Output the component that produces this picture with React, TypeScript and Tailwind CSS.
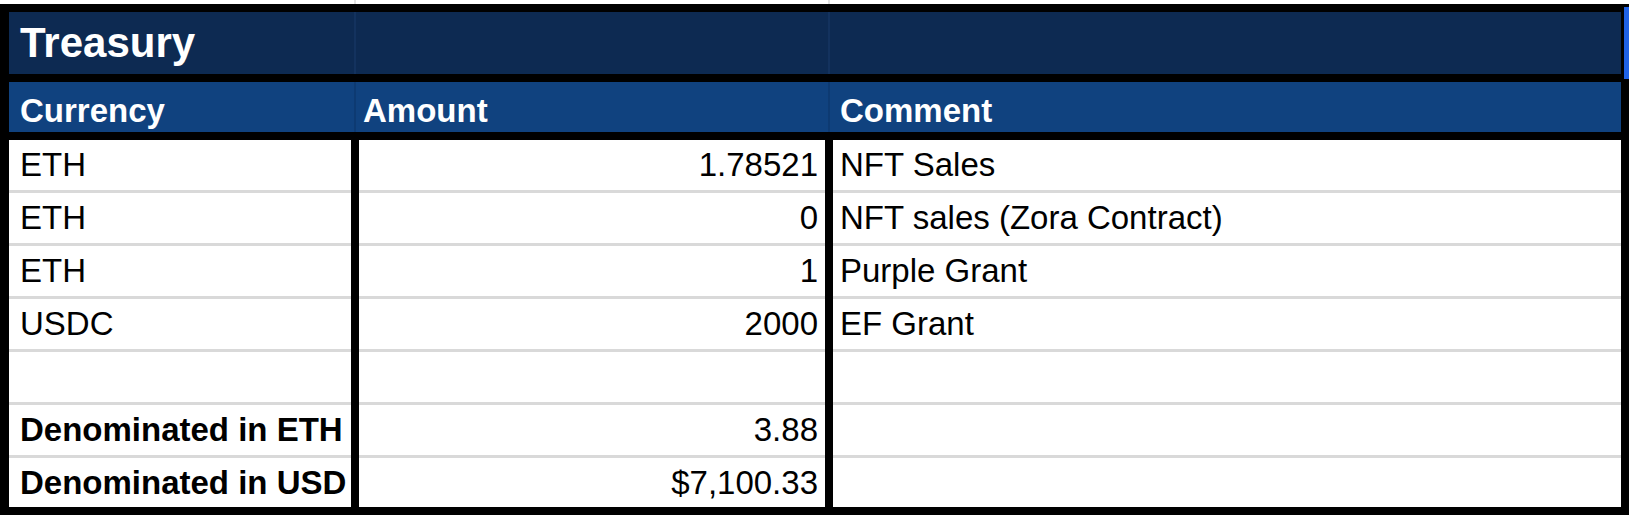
import React from 'react'

type Row = { currency: string; amount: string; comment: string; bold?: boolean }

const rows: Row[] = [
  { currency: 'ETH', amount: '1.78521', comment: 'NFT Sales' },
  { currency: 'ETH', amount: '0', comment: 'NFT sales (Zora Contract)' },
  { currency: 'ETH', amount: '1', comment: 'Purple Grant' },
  { currency: 'USDC', amount: '2000', comment: 'EF Grant' },
  { currency: '', amount: '', comment: '' },
  { currency: 'Denominated in ETH', amount: '3.88', comment: '', bold: true },
  { currency: 'Denominated in USD', amount: '$7,100.33', comment: '', bold: true },
]

function GridLine({ color }: { color: string }) {
  return (
    <div className="flex justify-center">
      <div className={`w-[2px] h-full ${color}`} />
    </div>
  )
}

export default function App() {
  return (
    <div className="relative w-[1630px] h-[518px] bg-white text-black font-['Liberation_Sans',Arial,sans-serif]">
      {/* sheet gridlines above the table */}
      <div className="grid grid-cols-[351px_8px_466px_8px_797px] h-[4px]">
        <div />
        <GridLine color="bg-[#e2e2e2]" />
        <div />
        <GridLine color="bg-[#e2e2e2]" />
        <div />
      </div>

      <div className="w-[1629px] border-8 border-l-[9px] border-black">
        {/* title */}
        <div className="grid grid-cols-[342px_8px_466px_8px_788px] h-[70px] bg-[#0d2a52] border-b-8 border-black">
          <div className="pl-[11px] text-[42px] leading-[62px] font-bold text-white">Treasury</div>
          <GridLine color="bg-[#13325e]" />
          <div />
          <GridLine color="bg-[#13325e]" />
          <div />
        </div>

        {/* header */}
        <div className="grid grid-cols-[342px_8px_466px_8px_788px] h-[58px] bg-[#10427f] border-b-8 border-black text-[33px] leading-[42px] font-bold text-white">
          <div className="pl-[11px] pt-[8px]">Currency</div>
          <GridLine color="bg-[#0d3a72]" />
          <div className="pl-[4px] pt-[8px]">Amount</div>
          <GridLine color="bg-[#0d3a72]" />
          <div className="pl-[7px] pt-[8px]">Comment</div>
        </div>

        {/* body */}
        {rows.map((r, i) => {
          const last = i === rows.length - 1
          const cell = last ? 'h-[49px]' : 'h-[53px] border-b-[3px] border-[#d9d9d9]'
          return (
            <div key={i} className="grid grid-cols-[342px_8px_466px_8px_788px] text-[33px] leading-[50px]">
              <div className={`${cell} pl-[11px] whitespace-nowrap ${r.bold ? 'font-bold' : ''}`}>{r.currency}</div>
              <div className="bg-black" />
              <div className={`${cell} pr-[7px] text-right`}>{r.amount}</div>
              <div className="bg-black" />
              <div className={`${cell} pl-[7px] whitespace-nowrap`}>{r.comment}</div>
            </div>
          )
        })}
      </div>

      {/* selected cell edge */}
      <div className="absolute left-[1624px] top-[7px] w-[5px] h-[72px] bg-[#1f62e6]" />
    </div>
  )
}
